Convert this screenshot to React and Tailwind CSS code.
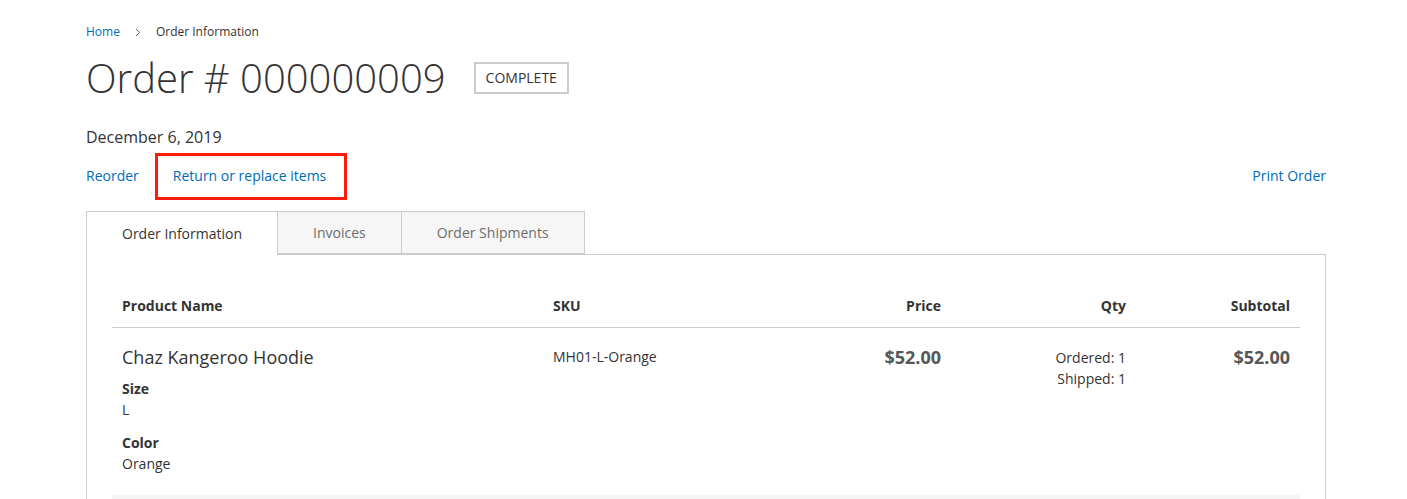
export default function App() {
  return (
    <div className="min-h-[499px] bg-white pl-[86px] pr-[81px] pt-[22px] text-[#333] font-['Open_Sans',sans-serif]">
      {/* Breadcrumbs */}
      <div className="flex items-center text-[12px] leading-[20px]">
        <a className="text-[#006bb4]">Home</a>
        <svg className="mx-[15px]" width="6" height="9" viewBox="0 0 6 9" fill="none">
          <path d="M1 1l3.5 3.5L1 8" stroke="#666" strokeWidth="1" />
        </svg>
        <span>Order Information</span>
      </div>

      {/* Title */}
      <div className="mt-[12px] flex items-center">
        <h1 className="text-[40px] font-light leading-[48px]">Order # 000000009</h1>
        <span className="ml-[28px] flex h-[32px] items-center border-2 border-[#ccc] px-[10px] text-[14px] uppercase leading-none">
          Complete
        </span>
      </div>

      <div className="mt-[24px] text-[16px] leading-[22px]">December 6, 2019</div>

      {/* Actions */}
      <div className="mt-[4px] flex h-[48px] items-center text-[14px] leading-[20px]">
        <a className="text-[#006bb4]">Reorder</a>
        <div className="ml-[16px] flex h-[47px] items-center border-[3px] border-[#ff1a0a] pl-[15px] pr-[18px]">
          <a className="text-[#006bb4]">Return or replace items</a>
        </div>
        <a className="ml-auto text-[#006bb4]">Print Order</a>
      </div>

      {/* Tabs */}
      <div className="mt-[11px] flex text-[14px] leading-[20px]">
        <div className="relative z-10 -mb-px flex h-[44px] items-center border border-b-0 border-[#ccc] bg-white px-[35px]">
          Order Information
        </div>
        <div className="flex h-[43px] items-center border border-l-0 border-[#ccc] bg-[#f6f6f6] px-[35px] text-[#6d6d6d]">
          Invoices
        </div>
        <div className="flex h-[43px] items-center border border-l-0 border-[#ccc] bg-[#f6f6f6] px-[35px] text-[#6d6d6d]">
          Order Shipments
        </div>
      </div>

      {/* Panel */}
      <div className="border border-[#ccc] px-[25px] pt-[30px]">
        <div className="grid grid-cols-[431px_250px_158px_185px_164px] border-b border-[#ccc] text-[14px] font-bold leading-[20px]">
          <div className="px-[10px] py-[11px]">Product Name</div>
          <div className="px-[10px] py-[11px]">SKU</div>
          <div className="px-[10px] py-[11px] text-right">Price</div>
          <div className="px-[10px] py-[11px] text-right">Qty</div>
          <div className="px-[10px] py-[11px] text-right">Subtotal</div>
        </div>

        <div className="grid grid-cols-[431px_250px_158px_185px_164px] pb-[21px] pt-[17px] text-[14px]">
          <div className="px-[10px]">
            <div className="text-[18px] leading-[24px]">Chaz Kangeroo Hoodie</div>
            <div className="mt-[10px] font-bold leading-[20px]">Size</div>
            <div className="leading-[21px]">L</div>
            <div className="mt-[13px] font-bold leading-[20px]">Color</div>
            <div className="leading-[21px]">Orange</div>
          </div>
          <div className="px-[10px] pt-[2px] leading-[20px]">MH01-L-Orange</div>
          <div className="px-[10px] text-right text-[18px] font-bold leading-[24px] text-[#575757]">$52.00</div>
          <div className="px-[10px] pt-[2px] text-right leading-[21px]">
            <div>Ordered: 1</div>
            <div>Shipped: 1</div>
          </div>
          <div className="px-[10px] text-right text-[18px] font-bold leading-[24px] text-[#575757]">$52.00</div>
        </div>

        <div className="h-[40px] bg-[#f5f5f5]" />
      </div>
    </div>
  );
}
